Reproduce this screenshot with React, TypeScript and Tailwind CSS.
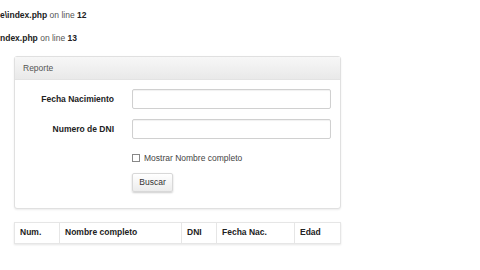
export default function App() {
  const cols = [
    { label: "Num.", w: "w-[44px]" },
    { label: "Nombre completo", w: "w-[122px]" },
    { label: "DNI", w: "w-[35px]" },
    { label: "Fecha Nac.", w: "w-[78px]" },
    { label: "Edad", w: "flex-1" },
  ];

  return (
    <div className="relative h-[270px] w-[480px] overflow-hidden bg-white font-['Liberation_Sans',Arial,sans-serif] text-[8.5px] text-[#333]">
      <div className="pt-[10px] leading-[10px]">
        <p className="text-[#222]">
          <b>e\index.php</b> <span className="text-[#555]">on line</span> <b>12</b>
        </p>
        <p className="mt-[13px] text-[#222]">
          <b>ndex.php</b> <span className="text-[#555]">on line</span> <b>13</b>
        </p>
      </div>

      <div className="ml-[14px] mt-[13px] w-[327px] rounded-[3px] border border-[#e0e0e0] bg-white shadow-[0_1px_2px_rgba(0,0,0,0.08)]">
        <div className="flex h-[23px] items-center border-b border-[#e3e3e3] bg-gradient-to-b from-[#f7f7f7] to-[#e9e9e9] px-[8px] text-[#555]">
          Reporte
        </div>
        <div className="pb-[16px] pt-[9px]">
          <div className="flex items-center">
            <label className="w-[99px] text-right font-bold text-[#222]">Fecha Nacimiento</label>
            <input className="ml-[18px] h-[20px] w-[199px] rounded-[2px] border border-[#d0d0d0] shadow-[inset_0_1px_1px_rgba(0,0,0,0.06)] outline-none" />
          </div>
          <div className="mt-[10px] flex items-center">
            <label className="w-[99px] text-right font-bold text-[#222]">Numero de DNI</label>
            <input className="ml-[18px] h-[20px] w-[199px] rounded-[2px] border border-[#d0d0d0] shadow-[inset_0_1px_1px_rgba(0,0,0,0.06)] outline-none" />
          </div>
          <div className="ml-[117px] mt-[13px] flex items-center gap-[4px] text-[#444]">
            <span className="inline-block h-[8px] w-[8px] border border-[#888] bg-white" />
            <span>Mostrar Nombre completo</span>
          </div>
          <button className="ml-[117px] mt-[8px] h-[19px] w-[41px] rounded-[2px] border border-[#d8d8d8] bg-gradient-to-b from-[#ffffff] to-[#ececec] text-[8.5px] text-[#333] shadow-[0_1px_2px_rgba(0,0,0,0.2)]">
            Buscar
          </button>
        </div>
      </div>

      <div className="ml-[14px] mt-[13px] flex h-[22px] w-[327px] border border-[#e6e6e6] bg-white shadow-[0_1px_2px_rgba(0,0,0,0.1)]">
        {cols.map((c, i) => (
          <div
            key={c.label}
            className={`${c.w} flex items-center px-[5px] font-bold text-[#222] ${i > 0 ? "border-l border-[#e6e6e6]" : ""}`}
          >
            {c.label}
          </div>
        ))}
      </div>
    </div>
  );
}
